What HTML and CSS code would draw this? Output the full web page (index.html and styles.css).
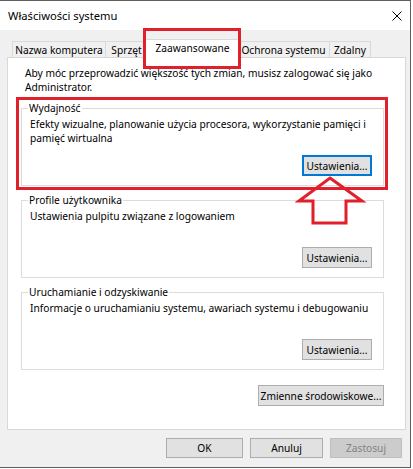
FILE: index.html
```html
<!DOCTYPE html>
<html lang="pl">
  <head>
    <meta charset="UTF-8" />
    <link rel="stylesheet" href="styles.css">
  </head>
  <body>
    <div class="window">
      <div class="titlebar">
        <span class="title">Właściwości systemu</span>
        <svg class="close" width="10" height="10" viewBox="0 0 10 10">
          <path d="M0.5 0.5 L9.5 9.5 M9.5 0.5 L0.5 9.5" stroke="#000" stroke-width="1" fill="none" />
        </svg>
      </div>
      <div class="content">
        <div class="tabs">
          <div class="tab tab-name">Nazwa komputera</div>
          <div class="tab tab-hw">Sprzęt</div>
          <div class="tab tab-adv active">Zaawansowane</div>
          <div class="tab tab-prot">Ochrona systemu</div>
          <div class="tab tab-remote">Zdalny</div>
        </div>
        <div class="panel">
          <div class="note">
            Aby móc przeprowadzić większość tych zmian, musisz zalogować się jako<br>
            Administrator.
          </div>
          <fieldset class="group">
            <legend>Wydajność</legend>
            <div class="group-body">
              <div class="desc">
                Efekty wizualne, planowanie użycia procesora, wykorzystanie pamięci i<br>
                pamięć wirtualna
              </div>
              <button class="btn focused">Ustawienia...</button>
            </div>
          </fieldset>
          <fieldset class="group">
            <legend>Profile użytkownika</legend>
            <div class="group-body">
              <div class="desc">Ustawienia pulpitu związane z logowaniem</div>
              <button class="btn">Ustawienia...</button>
            </div>
          </fieldset>
          <fieldset class="group">
            <legend>Uruchamianie i odzyskiwanie</legend>
            <div class="group-body">
              <div class="desc">Informacje o uruchamianiu systemu, awariach systemu i debugowaniu</div>
              <button class="btn">Ustawienia...</button>
            </div>
          </fieldset>
          <div class="env-row">
            <button class="btn btn-env">Zmienne środowiskowe...</button>
          </div>
        </div>
        <div class="footer">
          <button class="btn btn-ok">OK</button>
          <button class="btn btn-cancel">Anuluj</button>
          <button class="btn btn-apply" disabled>Zastosuj</button>
        </div>
      </div>

      <!-- red annotations drawn over the dialog -->
      <div class="mark mark-tab"></div>
      <div class="mark mark-group"></div>
      <svg class="arrow" width="72" height="54" viewBox="295 174 72 54">
        <path d="M330 178 L362 201 L346 201 L346 223 L313 223 L313 201 L299 201 Z"
              fill="none" stroke="#e0202b" stroke-width="3" stroke-linejoin="miter" />
      </svg>
    </div>
  </body>
</html>
```

FILE: styles.css
```css
body {
  margin: 0;
  background-color: #ffffff;
  font-family: "Noto Sans", "DejaVu Sans", sans-serif;
  font-size: 10.2px;
  color: #000000;
}
.window {
  position: relative;
  width: 410px;
  height: 466px;
  box-sizing: content-box;
  border-top: 1px solid #5f5f5f;
  border-right: 1px solid #5f5f5f;
  border-bottom: 1px solid #5f5f5f;
  background-color: #f0f0f0;
}
.titlebar {
  height: 29px;
  background-color: #ffffff;
  display: flex;
  align-items: center;
  justify-content: space-between;
  padding: 0 8px 0 8px;
  box-sizing: border-box;
}
.title {
  font-size: 11.2px;
}
.close {
  display: block;
}

.content {
  padding: 9px 4px 0 7px;
}
.tabs {
  display: flex;
  align-items: flex-end;
  padding-left: 5px;
  margin-bottom: -1px;
}
.tab {
  box-sizing: border-box;
  height: 17px;
  border: 1px solid #d9d9d9;
  border-bottom: none;
  display: flex;
  align-items: center;
  justify-content: center;
  white-space: nowrap;
}
.tab-name {
  width: 94px;
}
.tab-hw {
  width: 43px;
  margin-left: -1px;
}
.tab-adv {
  width: 95px;
  margin-left: -3px;
  margin-right: -3px;
}
.tab-prot {
  width: 93px;
}
.tab-remote {
  width: 42px;
  margin-left: -1px;
}
.tab.active {
  position: relative;
  z-index: 1;
  height: 19px;
  background-color: #ffffff;
  padding-bottom: 2px;
}

.panel {
  box-sizing: border-box;
  height: 373px;
  background-color: #ffffff;
  border: 1px solid #d9d9d9;
  padding: 8px 0 0 0;
}
.note {
  padding-left: 17px;
  line-height: 14px;
  white-space: nowrap;
}
.group {
  box-sizing: border-box;
  margin: 7px 21px 0 13px;
  padding: 0 11px 9px 8px;
  border: 1px solid #dcdcdc;
  min-width: 0;
}
.group legend {
  padding: 0 1px;
  margin-left: -2px;
  line-height: 14px;
}
.group-body {
  height: 61px;
  display: flex;
  flex-direction: column;
  align-items: flex-start;
}
.desc {
  padding-top: 2px;
  line-height: 14px;
  white-space: nowrap;
}
.group-body .btn {
  margin-top: auto;
  align-self: flex-end;
}

.btn {
  box-sizing: border-box;
  height: 21px;
  width: 70px;
  padding: 0;
  background-color: #e1e1e1;
  border: 1px solid #adadad;
  border-radius: 0;
  font-family: inherit;
  font-size: 10.2px;
  color: #000000;
  white-space: nowrap;
}
.btn.focused {
  border: 2px solid #0078d7;
}
.env-row {
  display: flex;
  justify-content: flex-end;
  margin-top: 15px;
  padding-right: 21px;
}
.btn-env {
  width: 126px;
}

.footer {
  display: flex;
  justify-content: flex-end;
  gap: 7px;
  margin-top: 8px;
  padding-right: 4px;
}
.footer .btn {
  height: 20px;
}
.btn-ok {
  width: 77px;
}
.btn-cancel {
  width: 73px;
}
.btn-apply {
  width: 72px;
}
.btn-apply:disabled {
  background-color: #cccccc;
  border-color: #bfbfbf;
  color: #838383;
}

.mark {
  position: absolute;
  box-sizing: border-box;
  border: 3px solid #e0202b;
  z-index: 5;
}
.mark-tab {
  left: 143px;
  top: 27px;
  width: 98px;
  height: 41px;
}
.mark-group {
  left: 16px;
  top: 96px;
  width: 372px;
  height: 93px;
}
.arrow {
  position: absolute;
  left: 295px;
  top: 173px;
  z-index: 5;
}
```
